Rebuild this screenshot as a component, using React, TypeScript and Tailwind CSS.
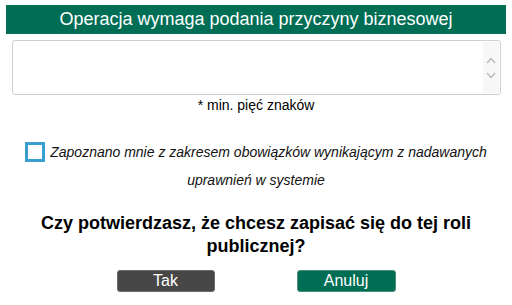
export default function App() {
  return (
    <div className="w-[512px] h-[305px] bg-white overflow-hidden font-['Liberation_Sans',Arial,sans-serif]">
      <div className="pt-[5px] px-[6px]">
        <div className="h-[29px] bg-[#006e54] text-white text-[18px] leading-[29px] text-center">
          Operacja wymaga podania przyczyny biznesowej
        </div>
      </div>

      <div className="mt-[6px] ml-[12px] w-[489px] h-[55px] border border-[#cfcfcf] rounded-[3px] flex justify-end">
        <div className="w-[16px] mr-[1px] my-[1px] bg-[#f7f7f7] flex flex-col items-center justify-center gap-[8px]">
          <svg width="10" height="7" viewBox="0 0 10 7" fill="none" stroke="#b8b8b8" strokeWidth="1.3">
            <path d="M1 6 L5 1.5 L9 6" />
          </svg>
          <svg width="10" height="7" viewBox="0 0 10 7" fill="none" stroke="#b8b8b8" strokeWidth="1.3">
            <path d="M1 1 L5 5.5 L9 1" />
          </svg>
        </div>
      </div>

      <p className="mt-[1px] text-center text-[14px] leading-[18px] text-black">* min. pięć znaków</p>

      <p className="mt-[24px] px-[20px] italic text-[14px] leading-[28px] text-center text-[#111]">
        <span className="inline-block align-middle w-[20px] h-[20px] border-[3px] border-[#3a9ed1] mr-[5px] -mt-[3px]" />
        Zapoznano mnie z zakresem obowiązków wynikającym z nadawanych uprawnień w systemie
      </p>

      <h2 className="mt-[18px] px-[30px] text-center font-bold text-[18px] leading-[23px] text-black">
        Czy potwierdzasz, że chcesz zapisać się do tej roli publicznej?
      </h2>

      <div className="mt-[12px] flex justify-center gap-[82px]">
        <button className="w-[98px] h-[22px] bg-[#474747] border border-[#6a6a6a] rounded-[3px] text-white text-[16px] leading-[20px]">
          Tak
        </button>
        <button className="w-[99px] h-[22px] bg-[#006e54] border border-[#4c8f7c] rounded-[3px] text-white text-[16px] leading-[20px]">
          Anuluj
        </button>
      </div>
    </div>
  );
}
